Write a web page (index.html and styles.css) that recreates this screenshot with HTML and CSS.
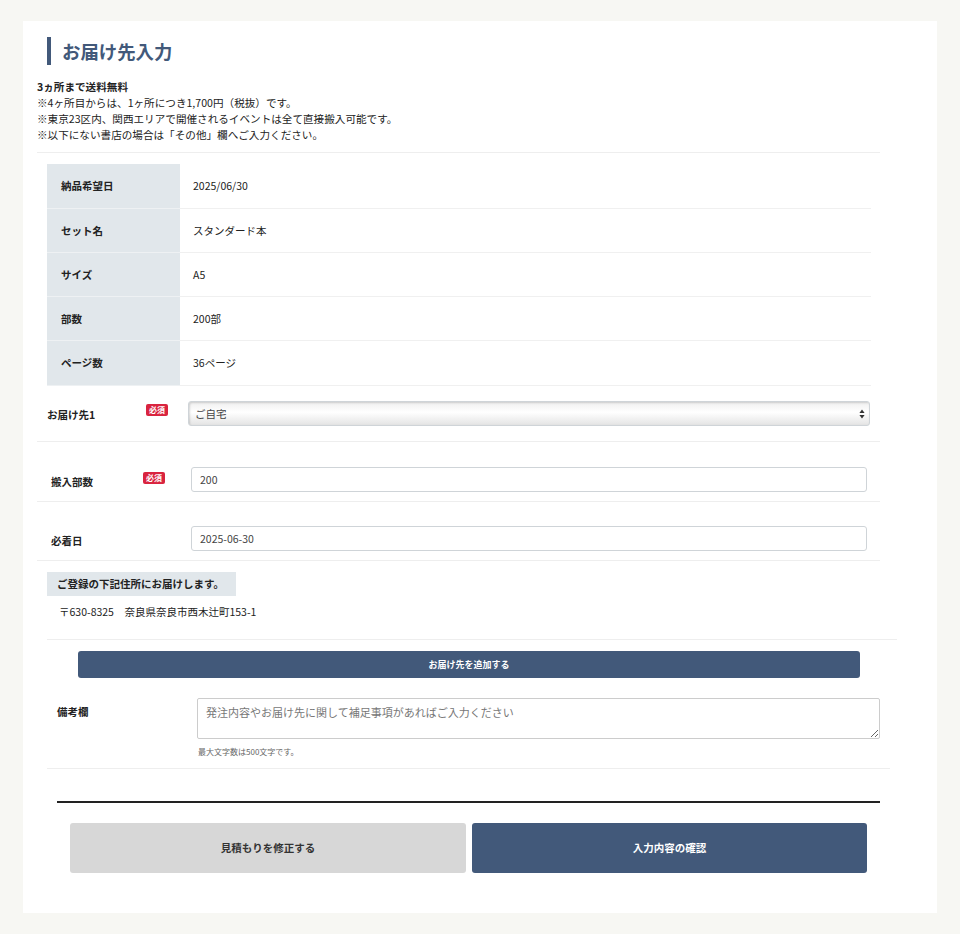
FILE: index.html
```html
<!DOCTYPE html>
<html lang="ja">
<head>
  <meta charset="UTF-8">
  <title>お届け先入力</title>
  <link rel="stylesheet" href="styles.css">
</head>
<body>
  <div class="card">
    <h2 class="title">お届け先入力</h2>

    <div class="notes">
      <p class="strong">3ヵ所まで送料無料</p>
      <p>※4ヶ所目からは、1ヶ所につき1,700円（税抜）です。</p>
      <p>※東京23区内、関西エリアで開催されるイベントは全て直接搬入可能です。</p>
      <p>※以下にない書店の場合は「その他」欄へご入力ください。</p>
    </div>

    <hr class="sep">

    <table class="summary">
      <tr><th>納品希望日</th><td>2025/06/30</td></tr>
      <tr><th>セット名</th><td>スタンダード本</td></tr>
      <tr><th>サイズ</th><td>A5</td></tr>
      <tr><th>部数</th><td>200部</td></tr>
      <tr class="last"><th>ページ数</th><td>36ページ</td></tr>
    </table>

    <div class="row row-dest">
      <label class="lbl">お届け先1</label>
      <span class="req">必須</span>
      <div class="sel-wrap">
        <select class="sel">
          <option>ご自宅</option>
        </select>
        <svg class="sel-arrow" width="6" height="10" viewBox="0 0 6 10">
          <path d="M3 0.5 L5.6 4 L0.4 4 Z M3 9.5 L5.6 6 L0.4 6 Z" fill="#333"/>
        </svg>
      </div>
    </div>

    <div class="row row-input">
      <label class="lbl">搬入部数</label>
      <span class="req">必須</span>
      <input class="txt" type="text" value="200">
    </div>

    <div class="row row-input row-last">
      <label class="lbl">必着日</label>
      <span class="req-none"></span>
      <input class="txt" type="text" value="2025-06-30">
    </div>

    <div class="address">
      <div class="addr-head">ご登録の下記住所にお届けします。</div>
      <p class="addr">〒630-8325　奈良県奈良市西木辻町153-1</p>
    </div>

    <div class="add-wrap">
      <button class="btn-add" type="button">お届け先を追加する</button>
    </div>

    <div class="remarks">
      <label class="lbl">備考欄</label>
      <div class="remarks-field">
        <textarea placeholder="発注内容やお届け先に関して補足事項があればご入力ください"></textarea>
        <p class="hint">最大文字数は500文字です。</p>
      </div>
    </div>

    <div class="actions">
      <button class="btn btn-back" type="button">見積もりを修正する</button>
      <button class="btn btn-next" type="button">入力内容の確認</button>
    </div>
  </div>
</body>
</html>
```

FILE: styles.css
```css
* {
  box-sizing: border-box;
}
body {
  margin: 0;
  padding: 21px 23px;
  background-color: #f7f7f3;
  font-family: "Noto Sans CJK JP", "Noto Sans", sans-serif;
  color: #222;
}
.card {
  background: white;
  width: 914px;
  height: 892px;
  padding: 16px 14px;
}
.title {
  margin: 0 0 0 10px;
  border-left: 4px solid #42597a;
  padding-left: 11px;
  height: 28px;
  line-height: 28px;
  font-size: 18.4px;
  font-weight: bold;
  color: #42597a;
}
.notes {
  margin-top: 14px;
  font-size: 10.6px;
  line-height: 16px;
}
.notes p {
  margin: 0;
}
.notes .strong {
  font-weight: bold;
}
.sep {
  margin: 9px 0 0;
  width: 843px;
  border: none;
  border-top: 1px solid #eeeeee;
}
.summary {
  margin: 11px 0 0 10px;
  width: 824px;
  border-collapse: collapse;
  font-size: 10.5px;
}
.summary th {
  width: 133px;
  height: 44px;
  padding-left: 14px;
  text-align: left;
  background: #e1e7eb;
  border-bottom: 1px solid #eef1f3;
}
.summary .last th {
  height: 45px;
}
.summary td {
  padding-left: 13px;
  border-bottom: 1px solid #f0f0f0;
}
.row {
  display: flex;
  width: 843px;
  border-bottom: 1px solid #eeeeee;
  font-size: 10.5px;
}
.lbl {
  font-weight: bold;
}
.req {
  display: inline-block;
  background: #d9243f;
  color: white;
  font-size: 8px;
  font-weight: bold;
  line-height: 12px;
  height: 12px;
  padding: 0 3px;
  border-radius: 2px;
}
.row-dest {
  height: 56px;
  align-items: center;
  padding-left: 10px;
}
.row-dest .lbl {
  width: 99px;
  margin-top: 3px;
}
.row-dest .req {
  margin-top: -6px;
}
.sel-wrap {
  position: relative;
  margin-left: 20px;
}
.sel {
  display: block;
  width: 682px;
  height: 25px;
  border: 1px solid #cfd4d8;
  border-radius: 3px;
  padding: 0 6px;
  font-family: inherit;
  font-size: 10.5px;
  color: #444;
  appearance: none;
  -webkit-appearance: none;
  background: linear-gradient(#f0f0f0, #ffffff 45%, #e4e4e4);
  box-shadow: inset 1px 1px 2px rgba(0,0,0,0.15);
}
.sel-arrow {
  position: absolute;
  right: 5px;
  top: 8px;
}
.row-input {
  height: 60px;
  padding-left: 14px;
  padding-top: 25px;
}
.row-last {
  height: 59px;
  padding-top: 24px;
}
.row-input .lbl {
  width: 92px;
  margin-top: 7px;
}
.row-input .req {
  margin-top: 5px;
}
.req-none {
  width: 22px;
}
.txt {
  margin-left: 26px;
  width: 676px;
  height: 25px;
  border: 1px solid #cfd4d8;
  border-radius: 3px;
  padding: 0 8px;
  font-family: inherit;
  font-size: 10.5px;
  color: #444;
}
.address {
  width: 850px;
  margin-left: 10px;
  padding-top: 11px;
  height: 79px;
  border-bottom: 1px solid #eeeeee;
  font-size: 10.5px;
}
.addr-head {
  display: inline-block;
  background: #e1e7eb;
  font-weight: bold;
  width: 189px;
  height: 24px;
  line-height: 24px;
  padding-left: 10px;
}
.addr {
  margin: 5px 0 0 12px;
  line-height: 22px;
}
.add-wrap {
  padding: 9px 0 0 41px;
}
.btn-add {
  width: 782px;
  height: 27px;
  background: #42597a;
  color: white;
  border: none;
  border-radius: 3px;
  font-family: inherit;
  font-size: 9px;
  font-weight: bold;
}
.remarks {
  display: flex;
  margin: 20px 0 0 10px;
  width: 843px;
  height: 71px;
  border-bottom: 1px solid #eeeeee;
  font-size: 10.5px;
}
.remarks .lbl {
  width: 150px;
  padding: 6px 0 0 10px;
}
.remarks-field {
  width: 683px;
}
.remarks textarea {
  display: block;
  width: 683px;
  height: 41px;
  border: 1px solid #cccccc;
  border-radius: 2px;
  padding: 5px 8px;
  font-family: inherit;
  font-size: 11px;
}
.remarks textarea::placeholder {
  color: #777;
}
.hint {
  margin: 7px 0 0 1px;
  font-size: 8px;
  color: #666;
}
.actions {
  display: flex;
  gap: 6px;
  margin: 32px 0 0 20px;
  width: 823px;
  border-top: 2px solid #222;
  padding: 20px 0 0 13px;
}
.btn {
  width: 396px;
  height: 50px;
  border: none;
  border-radius: 3px;
  font-family: inherit;
  font-size: 10.5px;
  font-weight: bold;
}
.btn-back {
  background: #d7d7d7;
  color: #333;
}
.btn-next {
  width: 395px;
  background: #42597a;
  color: white;
}
```
